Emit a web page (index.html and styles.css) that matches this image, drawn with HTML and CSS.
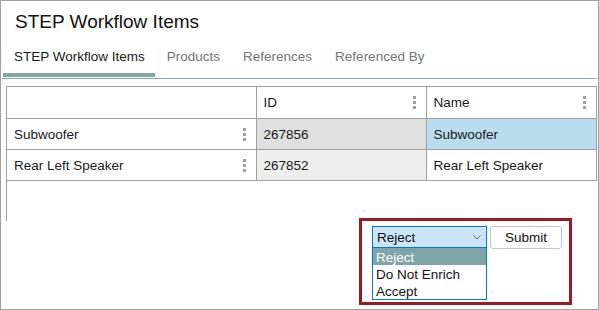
FILE: index.html
```html
<!DOCTYPE html>
<html lang="en">
<head>
    <meta charset="UTF-8">
    <title>STEP Workflow Items</title>
    <link rel="stylesheet" href="styles.css">
</head>
<body>
    <div class="window">
        <h1 class="title">STEP Workflow Items</h1>

        <div class="tabs">
            <div class="tab active">STEP Workflow Items</div>
            <div class="tab">Products</div>
            <div class="tab">References</div>
            <div class="tab">Referenced By</div>
        </div>

        <div class="grid">
            <table>
                <colgroup>
                    <col class="col-item">
                    <col class="col-id">
                    <col>
                </colgroup>
                <tr class="head">
                    <td></td>
                    <td><div class="cell">ID <span class="kebab"></span></div></td>
                    <td><div class="cell">Name <span class="kebab"></span></div></td>
                </tr>
                <tr>
                    <td><div class="cell">Subwoofer <span class="kebab"></span></div></td>
                    <td class="id-dark"><div class="cell">267856</div></td>
                    <td class="selected"><div class="cell">Subwoofer</div></td>
                </tr>
                <tr>
                    <td><div class="cell">Rear Left Speaker <span class="kebab"></span></div></td>
                    <td class="id-light"><div class="cell">267852</div></td>
                    <td><div class="cell">Rear Left Speaker</div></td>
                </tr>
            </table>
        </div>

        <div class="highlight">
            <div class="picker">
                <div class="select">
                    <span>Reject</span>
                    <svg class="chevron" width="8" height="5" viewBox="0 0 8 5">
                        <polyline points="0.5,0.5 4,4 7.5,0.5" fill="none" stroke="#666" stroke-width="1"/>
                    </svg>
                </div>
                <ul class="options">
                    <li class="current">Reject</li>
                    <li>Do Not Enrich</li>
                    <li>Accept</li>
                </ul>
            </div>
            <button type="button" class="submit">Submit</button>
        </div>
    </div>
</body>
</html>
```

FILE: styles.css
```css
body {
    margin: 0;
    background: #fff;
}

.window {
    width: 599px;
    height: 310px;
    box-sizing: border-box;
    border: 1px solid #a0a0a0;
    display: flex;
    flex-direction: column;
    font-family: "Liberation Sans", Arial, sans-serif;
    color: #1a1a1a;
}

.title {
    margin: 0;
    padding: 9px 14px 0;
    font-size: 19px;
    font-weight: normal;
    line-height: 24px;
    color: #111;
}

/* tabs */
.tabs {
    display: flex;
    margin: 0 1px;
    padding-bottom: 1px;
    border-bottom: 1px solid #80a7ae;
}

.tab {
    padding: 15px 11px 8px 12px;
    line-height: 16px;
    font-size: 13.5px;
    color: #747474;
    border-bottom: 4px solid transparent;
}

.tab:first-child {
    margin-left: 1px;
    padding: 15px 10px 8px 11px;
}

.tab.active {
    color: #1a1a1a;
    border-bottom-color: #80a6ac;
}

/* grid */
.grid {
    margin: 7px 1px 0 5px;
    height: 135px;
    border-left: 1px solid #a0a0a0;
}

.grid table {
    width: 100%;
    border-collapse: collapse;
    table-layout: fixed;
    font-size: 13.5px;
}

.col-item {
    width: 249px;
}

.col-id {
    width: 170px;
}

.grid td {
    height: 30px;
    padding: 0;
    border: 1px solid #a0a0a0;
    vertical-align: middle;
}

.grid td:first-child {
    border-left: none;
}

.grid .head td {
    height: 31px;
}

.cell {
    display: flex;
    align-items: center;
    justify-content: space-between;
    padding: 0 9px 0 7px;
}

.kebab {
    width: 5px;
    height: 15px;
    background: radial-gradient(circle, #a0a0a0 1.5px, transparent 1.8px) 0 0 / 5px 5px repeat-y;
}

.id-dark {
    background: #e0e0e0;
}

.id-light {
    background: #eeeeee;
}

.selected {
    background: #b9dcee;
}

/* action box */
.highlight {
    display: flex;
    align-items: flex-start;
    gap: 3px;
    width: 213px;
    height: 87px;
    box-sizing: border-box;
    margin: -3px 26px 0 auto;
    padding: 5px 0 0 10px;
    border: 3px solid #9b1b24;
    font-size: 13.5px;
}

.picker {
    position: relative;
}

.select {
    display: flex;
    align-items: center;
    justify-content: space-between;
    width: 115px;
    height: 22px;
    box-sizing: border-box;
    padding: 0 5px 0 4px;
    border: 1px solid #0078d7;
    background: #cce4f7;
    color: #111;
}

.options {
    position: absolute;
    top: 22px;
    left: 0;
    width: 115px;
    box-sizing: border-box;
    margin: 0;
    padding: 0;
    list-style: none;
    border: 1px solid #0078d7;
    border-top: none;
    background: #fff;
    color: #111;
}

.options li {
    height: 17px;
    line-height: 19px;
    padding-left: 3px;
    overflow: hidden;
}

.options li.current {
    background: #7fa5ab;
    color: #fff;
}

.submit {
    width: 72px;
    height: 23px;
    padding: 0;
    font-family: inherit;
    font-size: 13.5px;
    color: #111;
    background: #fcfcfc;
    border: 1px solid #c6c6c6;
    border-radius: 3px;
}
```
